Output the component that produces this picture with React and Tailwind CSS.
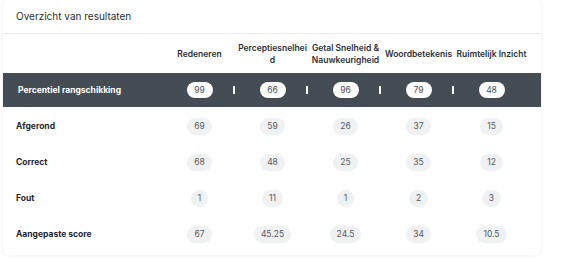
import React from "react";

const cols = ["Redeneren", "Perceptiesnelheid", "Getal Snelheid & Nauwkeurigheid", "Woordbetekenis", "Ruimtelijk Inzicht"];
const pct = [99, 66, 96, 79, 48];
const rows = [
  ["Afgerond", ["69", "59", "26", "37", "15"]],
  ["Correct", ["68", "48", "25", "35", "12"]],
  ["Fout", ["1", "11", "1", "2", "3"]],
  ["Aangepaste score", ["67", "45.25", "24.5", "34", "10.5"]],
];

export default function App() {
  return (
    <div className="w-[568px] h-[262px] bg-white" style={{ fontFamily: "Inter, 'Noto Sans', sans-serif" }}>
      <div className="ml-[3px] w-[538px] h-[255px] bg-white rounded-md shadow-[0_0_4px_rgba(0,0,0,0.08)] overflow-hidden">
        <div className="h-[34px] flex items-center px-[13px] border-b border-[#ececec]">
          <span className="text-[10px] text-[#2b2f33]">Overzicht van resultaten</span>
        </div>
        <div className="h-[39px] flex items-center px-[13px]">
          <div className="w-[147px]" />
          {cols.map((c) => (
            <div key={c} className="w-[73px] text-center text-[8.5px] leading-[12px] font-semibold text-[#2b3036] break-all">
              {c}
            </div>
          ))}
        </div>
        <div className="h-[34px] flex items-center px-[13px] bg-[#444d53]">
          <div className="w-[147px] pl-[2px] text-[8.5px] font-bold text-white">Percentiel rangschikking</div>
          {pct.map((p, i) => (
            <div key={i} className="w-[73px] relative flex items-center justify-center">
              <span className="bg-white rounded-full h-[16px] min-w-[26px] px-[7px] flex items-center justify-center text-[8.5px] text-[#4a4f55]">
                {p}
              </span>
              {i < 4 && <span className="absolute right-[1px] top-1/2 -translate-y-1/2 w-[2px] h-[8px] bg-white" />}
            </div>
          ))}
        </div>
        <div className="pt-[1px]">
          {rows.map(([label, vals]) => (
            <div key={label} className="flex items-center px-[13px] h-[36px]">
              <div className="w-[147px] text-[8.5px] font-bold text-[#1f262d]">{label}</div>
              {vals.map((v, i) => (
                <div key={i} className="w-[73px] flex items-center justify-center">
                  <span className="bg-[#f0f1f3] rounded-full h-[17px] min-w-[17px] px-[7px] flex items-center justify-center text-[8.5px] text-[#555b61]">
                    {v}
                  </span>
                </div>
              ))}
            </div>
          ))}
        </div>
      </div>
    </div>
  );
}
